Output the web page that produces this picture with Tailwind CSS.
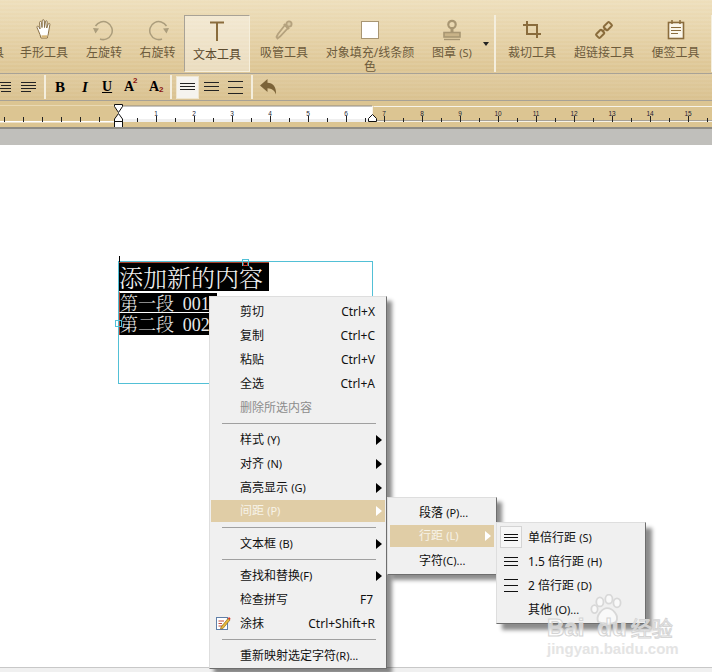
<!DOCTYPE html>
<html><head><meta charset="utf-8"><script src="https://cdn.jsdelivr.net/npm/@tailwindcss/browser@4"></script></head>
<body class="m-0 bg-white">
<div class="relative w-[712px] h-[672px] overflow-hidden flex flex-col bg-white text-[12px] font-['Noto_Sans','Noto_Sans_CJK_SC',sans-serif]">

<!-- toolbar row 1 -->
<div class="h-[74px] shrink-0 flex items-start border-b border-[#a8a296] text-[#6d5b3c] leading-[13.5px] text-center bg-[repeating-linear-gradient(0deg,rgba(255,255,255,0.07)_0,rgba(255,255,255,0.07)_2px,transparent_2px,transparent_4px),linear-gradient(180deg,#eedfbc,#dcc492)]">
  <div class="w-[11px] h-[73px] overflow-hidden flex justify-end"><span class="mt-[46px] w-[12px] mr-[7px] shrink-0">具</span></div>
  <div class="w-[66px] flex flex-col items-center pt-[19px]">
    <svg class="h-[22px]" width="18" height="22" viewBox="0 0 18 22"><path d="M3.5 12 L2 8.5 C1.6 7 3.3 6.6 4 8 L5 10 L4.6 3.5 C4.6 2 6.4 2 6.6 3.5 L7 8.5 L7.2 1.8 C7.3 .3 9.2 .3 9.3 1.8 L9.5 8.5 L10.4 2.8 C10.7 1.3 12.4 1.6 12.2 3 L11.7 9 L13.2 5 C13.7 3.8 15.2 4.3 14.9 5.6 L13.6 13 C13.3 16 12.5 17 12.3 19 L6 19 C5.6 16.5 4.4 14.5 3.5 12Z" fill="#fff" stroke="#8a7148" stroke-width="1"/><path d="M6.5 17.5 L12 17.5" stroke="#d8b878" stroke-width="2.4"/></svg>
    <span class="mt-[5px]">手形工具</span></div>
  <div class="w-[54px] flex flex-col items-center pt-[19px]">
    <svg class="h-[22px]" width="22" height="22" viewBox="0 0 22 22" fill="none"><path d="M2.5 7 A9 9 0 1 1 7 20" stroke="#ab9d7c" stroke-width="1.5"/><path d="M0 9 L6 9.500 L2.500 14.500Z" fill="#ab9d7c"/></svg>
    <span class="mt-[5px]">左旋转</span></div>
  <div class="w-[53px] flex flex-col items-center pt-[19px]">
    <svg class="h-[22px]" width="22" height="22" viewBox="0 0 22 22" fill="none"><path d="M19.500 7 A9 9 0 1 0 15 20" stroke="#ab9d7c" stroke-width="1.5"/><path d="M22 9 L16 9.500 L19.500 14.500Z" fill="#ab9d7c"/></svg>
    <span class="mt-[5px]">右旋转</span></div>
  <div class="w-[66px] h-[57px] mt-[15px] flex flex-col items-center pt-[4px] border border-t-[#a8a296] border-l-[#a8a296] border-b-[#f6efdc] border-r-[#f6efdc] bg-white/40">
    <svg class="h-[22px]" width="16" height="22" viewBox="0 0 16 22"><path d="M1 2.5 H15 M8 2.5 V21" stroke="#8a6c3c" stroke-width="2" fill="none"/></svg>
    <span class="mt-[6px] text-[#5c4b2f]">文本工具</span></div>
  <div class="w-[68px] flex flex-col items-center pt-[19px]">
    <svg class="h-[22px]" width="18" height="22" viewBox="0 0 18 22" fill="none" stroke="#b5a27e" stroke-width="1.8"><path d="M10 6 L13 9 L5 17.500 L2.500 19.500 L1.500 18 L3 15Z"/><path d="M9 5 L14 10" stroke-width="2.400"/><circle cx="14" cy="5" r="2.600" fill="#d9c9a4"/></svg>
    <span class="mt-[5px]">吸管工具</span></div>
  <div class="w-[104px] flex flex-col items-center pt-[19px]">
    <div class="h-[22px] flex items-center"><div class="w-[18px] h-[18px] bg-white border border-[#a89672]"></div></div>
    <span class="mt-[5px] w-[92px]">对象填充/线条颜色</span></div>
  <div class="w-[60px] flex flex-col items-center pt-[19px]">
    <svg class="h-[22px]" width="20" height="22" viewBox="0 0 20 22" fill="none" stroke="#a89672"><circle cx="10" cy="5.5" r="3.7" stroke-width="2.2"/><path d="M10 9 V13" stroke-width="3"/><rect x="2" y="13.5" width="16" height="4.5" fill="#c9b388" stroke-width="1.6"/><path d="M2 20.5 H18" stroke-width="1.4"/></svg>
    <span class="mt-[5px] whitespace-nowrap">图章 <span class="text-[11px]">(S)</span></span></div>
  <div class="w-[12px] pt-[42px] pl-[1px]"><svg width="6" height="4" viewBox="0 0 6 4"><path d="M0 0H6L3 4Z" fill="#222"/></svg></div>
  <div class="w-[2px] h-[57px] mt-[15px] bg-[#f4eedd]"></div>
  <div class="w-[72px] flex flex-col items-center pt-[19px]">
    <svg class="h-[22px]" width="20" height="22" viewBox="0 0 20 22" fill="none" stroke="#8a6c3c" stroke-width="2"><path d="M5 2 V15 H19 M1 6 H15 V19"/></svg>
    <span class="mt-[5px]">裁切工具</span></div>
  <div class="w-[72px] flex flex-col items-center pt-[19px]">
    <svg class="h-[22px]" width="20" height="22" viewBox="0 0 20 22" fill="none" stroke="#8a6c3c" stroke-width="2"><rect x="-3.5" y="-2.6" width="7.5" height="5.2" rx="1" transform="translate(6 15) rotate(-45)"/><rect x="-4" y="-2.6" width="7.5" height="5.2" rx="1" transform="translate(14 7) rotate(-45)"/><path d="M8 13 L12 9" stroke-width="1.4"/></svg>
    <span class="mt-[5px]">超链接工具</span></div>
  <div class="w-[71px] flex flex-col items-center pt-[19px]">
    <svg class="h-[22px]" width="18" height="22" viewBox="0 0 18 22" fill="none" stroke="#8a6c3c"><rect x="1.5" y="3.5" width="15" height="16" fill="#fbf7ec" stroke-width="1.6"/><path d="M5 1 V5 M13 1 V5" stroke-width="1.5"/><path d="M4 8.5 H14 M4 11.5 H14 M4 14.5 H11" stroke-width="1"/></svg>
    <span class="mt-[5px]">便签工具</span></div>
  <div class="w-[1px] h-[57px] mt-[15px] bg-[#f4eedd]"></div>
</div>

<!-- toolbar row 2 -->
<div class="h-[27px] shrink-0 flex items-center border-b border-[#a8a296] bg-[repeating-linear-gradient(0deg,rgba(255,255,255,0.05)_0,rgba(255,255,255,0.05)_2px,transparent_2px,transparent_4px),linear-gradient(180deg,#e0cb9f,#d9c18f)] text-black font-['Liberation_Serif',serif] font-bold">
  <svg class="ml-[-3px]" width="14" height="12" viewBox="0 0 14 12" stroke="#222"><path d="M0 1.5H14M4 4.5H14M0 7.5H14M4 10.5H14"/></svg>
  <svg class="ml-[10px]" width="15" height="12" viewBox="0 0 15 12" stroke="#222"><path d="M0 1.5H15M0 4.5H15M0 7.5H15M0 10.5H10"/></svg>
  <div class="ml-[8px] w-[2px] h-[24px] bg-[#f4eedd]"></div>
  <span class="ml-[9px] w-[10px] text-[15px] leading-none font-black text-center">B</span>
  <span class="ml-[15px] w-[10px] text-[15px] leading-none italic text-center">I</span>
  <span class="ml-[12px] w-[10px] text-[14px] leading-none underline text-center">U</span>
  <span class="ml-[12px] w-[14px] text-[14px] leading-none relative">A<span class="absolute left-[9px] top-[-3px] text-[8px] text-[#8a1010] font-['Liberation_Sans',sans-serif]">2</span></span>
  <span class="ml-[11px] w-[14px] text-[14px] leading-none relative">A<span class="absolute left-[10px] top-[6px] text-[8px] text-[#8a1010] font-['Liberation_Sans',sans-serif]">2</span></span>
  <div class="ml-[7px] w-[2px] h-[24px] bg-[#f4eedd]"></div>
  <div class="ml-[4px] w-[23px] h-[23px] flex items-center justify-center bg-[#f5f3ee] border border-[#efe6cf]">
    <svg width="15" height="10" viewBox="0 0 15 10" stroke="#222"><path d="M0 1.5H15M0 4.5H15M0 7.5H15"/></svg></div>
  <svg class="ml-[5px]" width="15" height="12" viewBox="0 0 15 12" stroke="#222"><path d="M0 1.5H15M0 5.5H15M0 9.5H15"/></svg>
  <svg class="ml-[9px]" width="15" height="14" viewBox="0 0 15 14" stroke="#222"><path d="M0 1.5H15M0 7.5H15M0 13.5H15"/></svg>
  <div class="ml-[8px] w-[2px] h-[24px] bg-[#f4eedd]"></div>
  <svg class="ml-[7px]" width="17" height="16" viewBox="0 0 17 16"><path d="M0 6.5 L7.5 0 V3.8 C13 4 16.5 8 16 15.5 C14.5 11.5 12 9.5 7.5 9.3 V13Z" fill="#7c6338"/></svg>
</div>

<!-- ruler -->
<div class="h-[28px] shrink-0 border-b-2 border-[#8f8c84] bg-[#dcc592]">
  <svg class="block" width="712" height="26" viewBox="0 101 712 26" font-family="Liberation Sans" font-size="6.5" text-anchor="middle" fill="#223">
    <rect x="0" y="105" width="118" height="1" fill="#e9d9b4"/>
    <rect x="0" y="121" width="118" height="1.5" fill="#fff"/>
    <rect x="118" y="106" width="254" height="15" fill="#fff"/>
    <rect x="118" y="105.500" width="254" height="1" fill="#8f8c84"/>
    <rect x="118" y="119" width="254" height="3" fill="#efefef"/>
    <path d="M372.500 106 V121.500 H712 M373.500 106.500 H712" stroke="#f7f3e8" fill="none"/>
    <path d="M373 120.500 H712" stroke="#a8a296" fill="none"/>
    <path d="M4.500 117V122M23.500 117V122M42.500 117V122M61.500 117V122M80.500 117V122M99.500 117V122M137.500 118V122M156.500 116V122M175.500 118V122M194.500 116V122M213.500 118V122M232.500 116V122M251.500 118V122M270.500 116V122M289.500 118V122M308.500 116V122M327.500 118V122M346.500 116V122M365.500 118V122M384.500 116V122M403.500 118V122M422.500 116V122M441.500 118V122M460.500 116V122M479.500 118V122M498.500 116V122M517.500 118V122M536.500 116V122M555.500 118V122M574.500 116V122M593.500 118V122M612.500 116V122M631.500 118V122M650.500 116V122M669.500 118V122M688.500 116V122M707.500 118V122" stroke="#222"/>
    <text x="156" y="116">1</text><text x="194" y="116">2</text><text x="232" y="116">3</text><text x="270" y="116">4</text><text x="308" y="116">5</text><text x="346" y="116">6</text><text x="384" y="116">7</text><text x="422" y="116">8</text><text x="460" y="116">9</text><text x="498" y="116">10</text><text x="536" y="116">11</text><text x="574" y="116">12</text><text x="612" y="116">13</text><text x="650" y="116">14</text><text x="688" y="116">15</text>
    <path d="M114.500 104.500 H122.500 V106.500 L118.500 112.500 L114.500 106.500Z" fill="#fff" stroke="#111"/>
    <path d="M118.500 113.500 L122.500 119 V127.500 H114.500 V119Z" fill="#fff" stroke="#111"/>
    <path d="M114.500 121.500 H122.500" stroke="#111"/>
    <path d="M368.500 121.500 V118.500 L372.500 114.500 L376.500 118.500 V121.500Z" fill="#fff" stroke="#111"/>
  </svg>
</div>

<div class="h-[16px] shrink-0 bg-[#c0bfbb]"></div>

<!-- page -->
<div class="flex-1 pt-[116px] pl-[118px] font-['Noto_Serif_CJK_SC','Noto_Sans_CJK_SC',serif]">
  <div class="relative w-[255px] h-[123px] border border-[#52c0d6]">
    <div class="absolute left-0 top-[-6px] w-[1px] h-[6px] bg-black"></div>
    <div class="absolute left-[123px] top-[-3px] w-[7px] h-[7px] border border-[#52c0d6] z-10"><div class="mt-[3px] h-[3px] border border-t-0 border-[#c0392b]"></div></div>
    <div class="absolute left-[-4px] top-[58px] w-[7px] h-[7px] border border-[#52c0d6] z-10"></div>
    <div class="w-[150px] h-[29px] bg-black border-t border-[#a8402c] text-[#f4f4f4] text-[24px] leading-[27px] whitespace-nowrap font-light">添加新的内容</div>
    <div class="w-[98px] h-[21px] bg-black border-l border-[#a8402c] border-t-2 border-t-white text-[#e8e8e8] text-[18px] leading-[18px] whitespace-nowrap font-light">第一段 <span class="ml-[4px] font-['Liberation_Serif',serif]">001</span></div>
    <div class="w-[98px] h-[23px] bg-black border-l border-[#a8402c] border-t border-t-white text-[#e8e8e8] text-[18px] leading-[20px] whitespace-nowrap font-light">第二段 <span class="ml-[4px] font-['Liberation_Serif',serif]">002</span></div>
  </div>
</div>

<!-- status strip -->
<div class="h-[5px] shrink-0 bg-[#f0f0f0] border-t border-[#c8c8c8]"></div>

<!-- context menu -->
<div class="absolute left-[209px] top-[296px] w-[178px] h-[373px] pt-[3px] pb-px px-[1px] bg-[#f0f0f0] border border-t-[#dedede] border-l-[#dedede] border-r-[#6e6e6e] border-b-[#6e6e6e] shadow-[5px_5px_4px_rgba(0,0,0,0.45)] text-[#111] z-20">
  <div class="h-6 flex items-center justify-between pl-[29px] pr-[10px]"><span>剪切</span><span>Ctrl+X</span></div>
  <div class="h-6 flex items-center justify-between pl-[29px] pr-[10px]"><span>复制</span><span>Ctrl+C</span></div>
  <div class="h-6 flex items-center justify-between pl-[29px] pr-[10px]"><span>粘贴</span><span>Ctrl+V</span></div>
  <div class="h-6 flex items-center justify-between pl-[29px] pr-[10px]"><span>全选</span><span>Ctrl+A</span></div>
  <div class="h-6 flex items-center pl-[29px] text-[#8c8c8c]">删除所选内容</div>
  <div class="h-2 pt-[3px] pl-[11px] pr-[9px]"><div class="h-px w-full bg-[#a0a0a0]"></div></div>
  <div class="h-6 flex items-center justify-between pl-[29px] pr-[3px]"><span>样式 <span class="text-[11px]">(Y)</span></span><svg width="6" height="10" viewBox="0 0 6 10"><path d="M0 0L6 5L0 10Z" fill="#000"/></svg></div>
  <div class="h-6 flex items-center justify-between pl-[29px] pr-[3px]"><span>对齐 <span class="text-[11px]">(N)</span></span><svg width="6" height="10" viewBox="0 0 6 10"><path d="M0 0L6 5L0 10Z" fill="#000"/></svg></div>
  <div class="h-6 flex items-center justify-between pl-[29px] pr-[3px]"><span>高亮显示 <span class="text-[11px]">(G)</span></span><svg width="6" height="10" viewBox="0 0 6 10"><path d="M0 0L6 5L0 10Z" fill="#000"/></svg></div>
  <div class="h-[22px] mb-[2px] flex items-center justify-between pl-[29px] pr-[3px] bg-[#e0cda6] text-[#f7f3e8]"><span>间距 <span class="text-[11px]">(P)</span></span><svg width="6" height="10" viewBox="0 0 6 10"><path d="M0 0L6 5L0 10Z" fill="#fff"/></svg></div>
  <div class="h-2 pt-[3px] pl-[11px] pr-[9px]"><div class="h-px w-full bg-[#a0a0a0]"></div></div>
  <div class="h-6 flex items-center justify-between pl-[29px] pr-[3px]"><span>文本框 <span class="text-[11px]">(B)</span></span><svg width="6" height="10" viewBox="0 0 6 10"><path d="M0 0L6 5L0 10Z" fill="#000"/></svg></div>
  <div class="h-2 pt-[3px] pl-[11px] pr-[9px]"><div class="h-px w-full bg-[#a0a0a0]"></div></div>
  <div class="h-6 flex items-center justify-between pl-[29px] pr-[3px]"><span>查找和替换<span class="text-[11px]">(F)</span></span><svg width="6" height="10" viewBox="0 0 6 10"><path d="M0 0L6 5L0 10Z" fill="#000"/></svg></div>
  <div class="h-6 flex items-center justify-between pl-[29px] pr-[12px]"><span>检查拼写</span><span>F7</span></div>
  <div class="relative h-6 flex items-center justify-between pl-[29px] pr-[10px]"><svg class="absolute left-[4px] top-[3px]" width="16" height="16" viewBox="0 0 16 16"><rect x="1.500" y="2.500" width="11" height="12" fill="#fff" stroke="#5f7fa8"/><path d="M3.500 6H9M3.500 8.500H7M3.500 11H8" stroke="#c24a3a"/><path d="M6 12 L13 3.500 L15 5 L8 13.500 L5.500 14Z" fill="#e8b83a" stroke="#7a5a1a" stroke-width=".6"/><path d="M13 3.500 L14 2 L15.500 3.500 L15 5Z" fill="#d8382a"/></svg><span>涂抹</span><span>Ctrl+Shift+R</span></div>
  <div class="h-2 pt-[3px] pl-[11px] pr-[9px]"><div class="h-px w-full bg-[#a0a0a0]"></div></div>
  <div class="h-6 flex items-center pl-[29px]"><span>重新映射选定字符<span class="text-[11px]">(R)...</span></span></div>
</div>

<!-- submenu 1 -->
<div class="absolute left-[387px] top-[497px] w-[110px] h-[78px] pt-[3px] pb-px px-[2px] bg-[#f0f0f0] border border-t-[#dedede] border-l-[#dedede] border-r-[#6e6e6e] border-b-[#6e6e6e] shadow-[5px_5px_4px_rgba(0,0,0,0.45)] text-[#111] z-30">
  <div class="h-6 flex items-center pl-[29px]"><span>段落 <span class="text-[11px]">(P)...</span></span></div>
  <div class="h-[22px] mb-[2px] flex items-center justify-between pl-[29px] pr-[3px] bg-[#e0cda6] text-[#f7f3e8]"><span>行距 <span class="text-[11px]">(L)</span></span><svg width="6" height="10" viewBox="0 0 6 10"><path d="M0 0L6 5L0 10Z" fill="#fff"/></svg></div>
  <div class="h-6 flex items-center pl-[29px]"><span>字符<span class="text-[11px]">(C)...</span></span></div>
</div>

<!-- submenu 2 -->
<div class="absolute left-[496px] top-[522px] w-[150px] h-[102px] pt-[3px] pb-px px-[2px] bg-[#f0f0f0] border border-t-[#dedede] border-l-[#dedede] border-r-[#6e6e6e] border-b-[#6e6e6e] shadow-[6px_6px_4px_rgba(0,0,0,0.45)] text-[#111] z-40">
  <div class="h-6 flex items-center"><div class="w-[22px] h-[22px] ml-px mr-[6px] -translate-y-px flex items-center justify-center bg-[#f7f7f7] border border-[#d4d4d4]"><svg width="14" height="9" viewBox="0 0 14 9" stroke="#111"><path d="M0 1.500H14M0 4.500H14M0 7.500H14"/></svg></div><span>单倍行距 <span class="text-[11px]">(S)</span></span></div>
  <div class="h-6 flex items-center"><div class="w-[22px] h-[22px] ml-px mr-[6px] -translate-y-px flex items-center justify-center"><svg width="14" height="11" viewBox="0 0 14 11" stroke="#111"><path d="M0 1.500H14M0 5.500H14M0 9.500H14"/></svg></div><span>1.5 倍行距 <span class="text-[11px]">(H)</span></span></div>
  <div class="h-6 flex items-center"><div class="w-[22px] h-[22px] ml-px mr-[6px] -translate-y-px flex items-center justify-center"><svg width="14" height="13" viewBox="0 0 14 13" stroke="#111"><path d="M0 .5H14M0 6.500H14M0 12.500H14"/></svg></div><span>2 倍行距 <span class="text-[11px]">(D)</span></span></div>
  <div class="h-6 flex items-center pl-[29px]"><span>其他 <span class="text-[11px]">(O)...</span></span></div>
</div>

<!-- watermark -->
<div class="absolute left-[547px] top-[594px] w-[140px] h-[64px] z-50 pointer-events-none">
  <svg class="absolute left-[43px] top-0" width="36" height="32" viewBox="0 0 40 34" fill="#ffffff" fill-opacity=".6" stroke="#d8d8d8" stroke-width="2"><ellipse cx="11" cy="8" rx="4" ry="5"/><ellipse cx="21" cy="5" rx="4" ry="5"/><ellipse cx="30" cy="9" rx="4" ry="5"/><ellipse cx="5" cy="16" rx="3.500" ry="4.500"/><path d="M9 30 C6 23 14 15 19 15 C25 15 33 23 29 30 C25 33 14 33 9 30Z"/></svg>
  <div class="absolute left-0 top-[19px] text-[24px] leading-[28px] font-bold font-['Liberation_Sans',sans-serif] whitespace-nowrap text-white/60 [-webkit-text-stroke:1px_#d4d4d4]">Bai<span class="ml-[13px]">du</span><span class="ml-[4px] font-normal text-[21px] font-['Noto_Sans_CJK_SC',sans-serif]">经验</span></div>
  <div class="absolute left-0 top-[47px] text-[15px] leading-[16px] font-bold font-['Liberation_Sans',sans-serif] whitespace-nowrap text-[#e4e4e4]">jingyan.baidu.com</div>
</div>

</div>
</body></html>
